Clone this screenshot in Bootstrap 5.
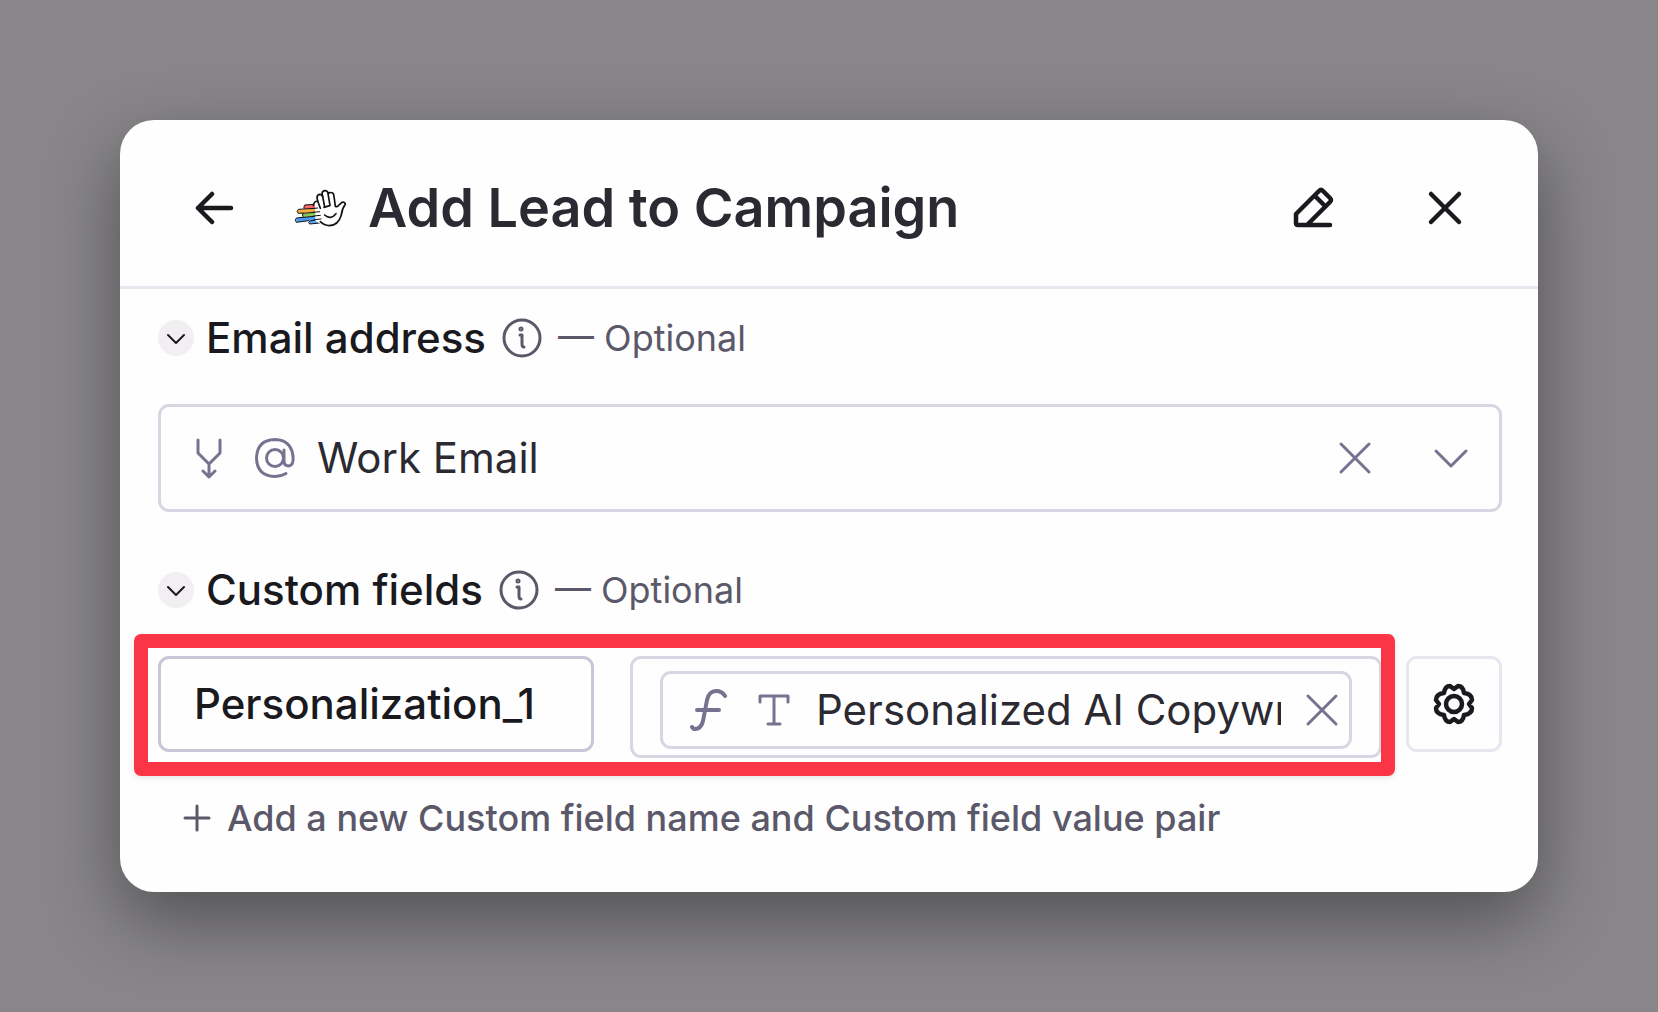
<!DOCTYPE html>
<html lang="en">
<head>
<meta charset="utf-8">
<meta name="viewport" content="width=device-width, initial-scale=1">
<title>Add Lead to Campaign</title>
<link href="https://cdn.jsdelivr.net/npm/bootstrap@5.3.0/dist/css/bootstrap.min.css" rel="stylesheet">
<style>
  body { background: #888689; font-family: Inter, "Liberation Sans", sans-serif; color: #1a191e; }
  .stage { padding: 120px; }
  .panel { background: #fefefe; border-radius: 34px; box-shadow: 0 28px 72px rgba(0, 0, 0, .4); }
  .panel-top { border-bottom: 3px solid #e8e7ee; padding: 43px 66px 33px 68px; }
  .panel-top h1 { font-size: 54px; line-height: 90px; font-weight: 600; color: #2b2a32; margin: 0 0 0 20px; }
  .plain { border: 0; background: none; padding: 0; color: inherit; display: flex; align-items: center; justify-content: center; flex: none; }
  .tool { width: 54px; height: 54px; }
  .rename { margin-right: 78px; }
  svg { display: block; flex: none; fill: none; stroke: currentColor; stroke-linecap: round; stroke-linejoin: round; }
  .app-logo { margin-left: 52px; color: #111; }
  .panel-main { padding: 21px 36px 46px 38px; }
  .section-line { height: 56px; }
  .fold { width: 36px; height: 36px; border-radius: 50%; background: #f1eff2; }
  .section-line label { font-size: 42px; line-height: 56px; font-weight: 500; margin: 0 16px 0 12px; }
  .hint { font-size: 36px; line-height: 56px; color: #5b5969; }
  .info { color: #5b5969; }
  .box { border: 3px solid #d8d6e2; border-radius: 11px; background: #fefefe; }
  .muted-icon { color: #76728f; }
  .entry { border: 0; background: none; outline: 0; padding: 0; min-width: 0; flex: 1 1 0; font-size: 42px; line-height: 56px; color: #2b2a32; }
  .select-box { height: 108px; margin: 38px 0 50px; padding: 0 30px 0 31px; }
  .select-box .at-sign { margin: 0 21px 0 28px; }
  .select-box .open-list { margin-left: 61px; }
  .pair-row { margin-top: 38px; gap: 24px; }
  .pair { position: relative; gap: 36px; flex: 1 1 0; min-width: 0; }
  .pair::after { content: ""; position: absolute; inset: -22px -13px -18px -24px; border: 14px solid #fa3545; border-radius: 7px; box-shadow: 0 2px 6px rgba(0, 0, 0, .1); pointer-events: none; }
  .name-box { border-color: #c9c6d8; height: 96px; flex: 0 1 436px; min-width: 0; padding: 0 33px; }
  .name-box .entry { font-weight: 500; color: #1a191e; }
  .value-box { flex: 1 1 0; min-width: 0; padding: 12px 27px 6px; }
  .token { height: 78px; padding: 0 10px 0 27px; }
  .token .text-type { margin: 0 25px 0 29px; }
  .gear { width: 96px; height: 96px; border-color: #e8e6ee; color: #1a191e; }
  .add-pair { margin: 32px 0 0 25px; gap: 16px; font-size: 36px; line-height: 56px; font-weight: 500; color: #5b5969; }
</style>
</head>
<body>
<main class="stage min-vh-100 d-flex align-items-center">
  <div class="panel w-100">
    <header class="panel-top d-flex align-items-center">
      <button class="plain tool" aria-label="Back"><svg width="40" height="40" viewBox="0 0 40 40" stroke-width="4.500"><path d="M36 20H3M17 6 3 20l14 14"/></svg></button>
      <svg class="app-logo" width="54" height="38" viewBox="43 37 162 114" stroke-width="5" aria-hidden="true">
        <g stroke="none">
          <path fill="#f4676b" d="M74 84h40v12H72z"/>
          <path fill="#f7b040" d="M54 99l58-4v12l-58 4z"/>
          <path fill="#86c65c" d="M68 111l44-4v12l-44 2z"/>
          <path fill="#4b9bf5" d="M50 124l62-6v11l-62 8z"/>
          <path fill="#5aa6f7" d="M88 132l34-4v10l-32 4z"/>
        </g>
        <path stroke-width="3" d="M102 83 76 85q-5 4-3 9M104 95 56 98q-7 6 0 12l14-1M104 107l-34 3q-4 5 0 9M104 119l-54 5q-6 7 0 13l36-5M108 130l-18 3q-6 4 0 9l30-3"/>
        <path fill="#fff" stroke="none" d="M106 90V76q4-8 11-3l-4-11q5-9 16-3l-1-8q8-12 17 1 12-5 16 8l6 30 20-15q12 1 9 9l-9 26-10 18-24 18-26-2-20-12z"/>
        <path d="M101 86q3-14 13-12l-2-12q1-9 9-9 6 1 8 7l-2-9q1-9 9-9t10 9q7-7 15 0 2 5 6 38 5 3 9-2l11-10q9-2 10 6-10 13-12 32-9 31-36 32-16-1-27-12"/>
        <path stroke-width="5" d="m114 73 8 22m7-36 6 32m10-40 6 35m-18 6 17-5m-15 28q18 16 34-4"/>
        <path stroke-width="3" d="m96 96 18-2m-14 13 20-2m-18 13 20-2m-18 13 20-2"/>
      </svg>
      <h1 class="flex-grow-1">Add Lead to Campaign</h1>
      <button class="plain tool rename" aria-label="Rename"><svg width="42" height="42" viewBox="0 0 42 42" stroke-width="4.500"><path d="M38 38H6q-2 0-2-2V27L27 4q2-2 4 0l7 7q2 2 0 4L16 37M23 9l10 10"/></svg></button>
      <button class="plain tool" aria-label="Close"><svg width="36" height="36" viewBox="0 0 36 36" stroke-width="4.500"><path d="m4 4 28 28M32 4 4 32"/></svg></button>
    </header>
    <div class="panel-main">
      <div class="section-line d-flex align-items-center">
        <button class="plain fold" aria-label="Collapse email address"><svg width="18" height="12" viewBox="0 0 18 12" stroke-width="2"><path d="m1 3 8 8 8-8"/></svg></button>
        <label for="mail">Email address</label>
        <svg class="info" width="40" height="40" viewBox="0 0 40 40" stroke-width="3"><circle cx="20" cy="20" r="18"/><path d="M18 17h2v9q0 3 2 3"/><circle cx="19" cy="11" r="1"/></svg>
        <span class="hint ms-3">— Optional</span>
      </div>
      <div class="box select-box d-flex align-items-center">
        <svg class="muted-icon" width="34" height="42" viewBox="0 0 34 42" stroke-width="3"><path d="M6 3v13l11 11 11-11V3M17 27v13M11 34l6 6 6-6"/></svg>
        <svg class="muted-icon at-sign" width="42" height="42" viewBox="0 0 42 42" stroke-width="3"><circle cx="21" cy="21" r="8.500"/><path d="M30 13v11q0 5 5 5 5-1 4-10Q37 3 21 2.500 3 3 2.500 21 3 39 21 39.500q6 0 11-3"/></svg>
        <input class="entry" id="mail" type="text" value="Work Email">
        <button class="plain muted-icon" aria-label="Clear"><svg width="34" height="34" viewBox="0 0 34 34" stroke-width="3"><path d="m3 3 28 28M31 3 3 31"/></svg></button>
        <button class="plain muted-icon open-list" aria-label="Open list"><svg width="36" height="22" viewBox="0 0 36 22" stroke-width="3"><path d="m3 4 15 15L33 4"/></svg></button>
      </div>
      <div class="section-line d-flex align-items-center">
        <button class="plain fold" aria-label="Collapse custom fields"><svg width="18" height="12" viewBox="0 0 18 12" stroke-width="2"><path d="m1 3 8 8 8-8"/></svg></button>
        <label for="field-name">Custom fields</label>
        <svg class="info" width="40" height="40" viewBox="0 0 40 40" stroke-width="3"><circle cx="20" cy="20" r="18"/><path d="M18 17h2v9q0 3 2 3"/><circle cx="19" cy="11" r="1"/></svg>
        <span class="hint ms-3">— Optional</span>
      </div>
      <div class="pair-row d-flex align-items-start">
        <div class="pair d-flex align-items-start">
          <div class="box name-box d-flex align-items-center"><input class="entry" id="field-name" type="text" value="Personalization_1"></div>
          <div class="box value-box">
            <div class="box token d-flex align-items-center">
              <svg class="muted-icon" width="38" height="42" viewBox="0 0 38 42" stroke-width="4"><path d="M35 7q-3-5-9-5-7 0-9 9l-4 21q-2 8-8 8-2 0-3-2M7 21h22"/></svg>
              <svg class="muted-icon text-type" width="34" height="34" viewBox="0 0 34 34" stroke-width="3"><path d="M3 9V3h28v6M17 3v28M11 31h12"/></svg>
              <input class="entry" type="text" aria-label="Custom field value" value="Personalized AI Copywriting">
              <button class="plain muted-icon ms-4" aria-label="Clear"><svg width="34" height="34" viewBox="0 0 34 34" stroke-width="3"><path d="m3 3 28 28M31 3 3 31"/></svg></button>
            </div>
          </div>
        </div>
        <button class="plain box gear" aria-label="Settings"><svg width="42" height="42" viewBox="-21 -21 42 42" stroke-width="4.500"><circle r="8"/><path d="M0-15 4-18Q9-18 10-11 18-10 18-4L15 0 18 4Q18 10 10 11 9 18 4 18L0 15-4 18Q-9 18-10 11-18 10-18 4L-15 0-18-4Q-18-10-10-11-9-18-4-18z"/></svg></button>
      </div>
      <button class="plain add-pair"><svg width="28" height="28" viewBox="0 0 28 28" stroke-width="3"><path d="M14 2v24M2 14h24"/></svg><span>Add a new Custom field name and Custom field value pair</span></button>
    </div>
  </div>
</main>
<script src="https://cdn.jsdelivr.net/npm/bootstrap@5.3.0/dist/js/bootstrap.bundle.min.js"></script>
</body>
</html>
